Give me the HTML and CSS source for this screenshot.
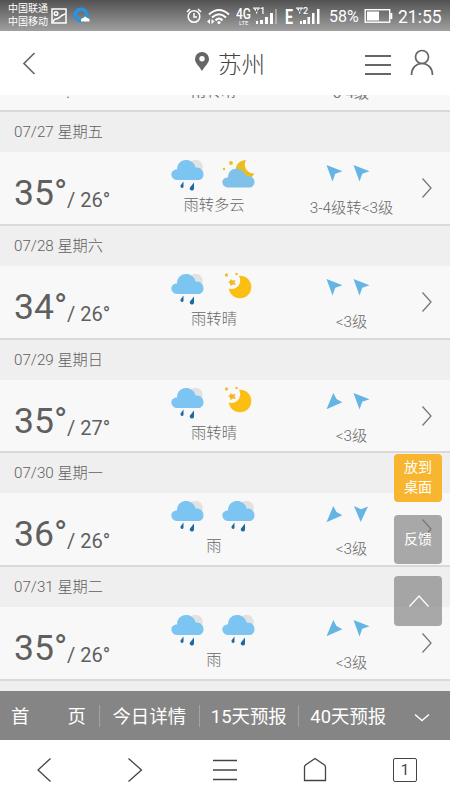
FILE: index.html
```html
<!DOCTYPE html>
<html lang="zh-CN">
<head>
<meta charset="utf-8">
<title>苏州天气</title>
<link rel="stylesheet" href="styles.css">
</head>
<body>
<svg class="defs" width="0" height="0">
  <symbol id="rain" viewBox="0 0 33 34">
    <circle cx="24.500" cy="9" r="7.300" fill="#e2e2e2"/>
    <path d="M6 22C-1.500 21-1.500 11.500 6 11.500C6 4 12 1.500 16 2C21 2.500 24 6 24.500 9.500C29 9 32.500 12 32.500 16C32.500 20 30 22 27 22Z" fill="#7cc4f1"/>
    <path d="M12.500 23.500V28.500Q12.500 30 11 30Q9 29.500 9.500 27.500ZM23 24.500V30.500Q23 33 20.500 32.500Q18 31.500 19 29.500Z" fill="#1c689f"/>
  </symbol>
  <symbol id="cloudy" viewBox="0 0 33 34">
    <path d="M24 2C19 2 13 6 14 12L24 19H30L32.500 15.500C27 16 20 10 24 2Z" fill="#eabe21"/>
    <circle cx="9" cy="5" r="1.900" fill="#eabe21"/><circle cx="2" cy="11" r="1.200" fill="#eabe21"/>
    <path d="M6 29.500C-1.500 28.500-1.500 19.500 6 19.500C6 13 11 10 16 11C20 11.500 23.500 15 24 18C29 17.500 32.500 20 32.500 24C32.500 27.500 30 29.500 27 29.500Z" fill="#7fc1e8"/>
  </symbol>
  <symbol id="clear" viewBox="0 0 33 34">
    <circle cx="18" cy="15" r="11.300" fill="#fbbe12"/>
    <circle cx="9.500" cy="8.300" r="8.700" fill="#f9f9f9"/>
    <path d="M8.500 7L10.500 8.500L13.500 8L12.500 10.500L14 13L11 12.500L8.500 14L8 11.500L6 10L8 9Z" fill="#f5b824"/>
    <circle cx="4.500" cy="3" r="1.700" fill="#edc13c"/><circle cx="14.500" cy="2" r="1.300" fill="#edc13c"/>
  </symbol>
  <symbol id="nw" viewBox="0 0 17 18"><path d="M.500 1L16.500 7.200L9.300 9.800L6.500 17.500Z" fill="#65b5e4"/></symbol>
  <symbol id="sw" viewBox="0 0 17 18"><path d="M.500 17.300L16.300 10.200L10.500 7L7.300 1Z" fill="#65b5e4"/></symbol>
  <symbol id="s" viewBox="0 0 17 18"><path d="M1 1L8 4.300L15 1.500L7.700 17Z" fill="#65b5e4"/></symbol>
  <symbol id="next" viewBox="0 0 12 22"><path d="M1.500 1.500L10 11L1.500 20.500" fill="none" stroke="#777" stroke-width="1.300"/></symbol>
</svg>

<div class="screen">
  <header class="status">
    <div class="carriers"><span>中国联通</span><span>中国移动</span></div>
    <svg class="pic" width="16" height="16" viewBox="0 0 16 16" fill="none" stroke="#fff" stroke-width="1.500"><rect x="1" y="1" width="14" height="14"/><circle cx="5" cy="5.500" r="1.800"/><path d="M2 14Q3 11 5 11T9 9T14 6"/></svg>
    <svg class="browser" width="17" height="17" viewBox="0 0 17 17"><circle cx="8" cy="8" r="5.800" fill="none" stroke="#2295e6" stroke-width="3.600"/><path d="M8 14.500Q7.500 11 10.500 11Q12 8 14 11Q17 11 16.500 14.500Z" fill="#fff"/></svg>
    <div class="space"></div>
    <svg class="radio" width="54" height="20" viewBox="0 0 54 20" fill="none" stroke="#fff" stroke-width="1.500">
      <circle cx="8" cy="10.500" r="5.800"/><path d="M8 7V11H11M1 6L4 3M12 3L15 6"/>
      <path d="M23 8.500Q33 -.500 43 8.500M26 11.500Q33 5 40 11.500M29.500 14.500Q33 10.500 36.500 14.500" stroke-width="2"/><circle cx="33" cy="16.500" r="1.600" fill="#fff" stroke="none"/><path d="M21 15.500L24 13V18ZM28.500 15.500L25.500 13V18Z" fill="#fff" stroke="none"/>
    </svg>
    <svg class="signals" width="88" height="24" viewBox="0 0 88 24" fill="#fff">
      <text x="0" y="14.500" class="network" textLength="15" lengthAdjust="spacingAndGlyphs">4G</text>
      <text x="3" y="20.500" class="lte">LTE</text>
      <path d="M17 3.500H24V4.800H17ZM20 3.500H21.300V9.500H20ZM17.500 4.500L20.500 8L23.500 4.500"/><text x="24" y="10" class="slot">1</text>
      <path d="M20 17H22V20H20ZM24 16H27V20H24ZM29 13H32V20H29ZM34 9H37V20H34Z"/><path d="M39 5H41V20H39Z" opacity=".35"/>
      <text x="49" y="20" class="edge" textLength="8" lengthAdjust="spacingAndGlyphs">E</text>
      <path d="M60 3.500H67V4.800H60ZM63 3.500H64.300V9.500H63ZM60.500 4.500L63.500 8L66.500 4.500"/><text x="67" y="10" class="slot">2</text>
      <path d="M64 17H66V20H64ZM67 16H70V20H67ZM71.500 13H74V20H71.500ZM76 9H78.500V20H76ZM81 5H83.500V20H81Z"/>
    </svg>
    <span class="percent">58%</span>
    <svg class="battery" width="29" height="16" viewBox="0 0 29 16"><rect x="1.200" y="1.700" width="24.500" height="12.500" fill="none" stroke="#fff" stroke-width="1.400"/><path d="M3 3.500H15V12.500H3ZM26.300 5H28.300V11H26.300Z" fill="#fff"/></svg>
    <span class="time">21:55</span>
  </header>

  <nav class="top">
    <svg class="back" width="14" height="24" viewBox="0 0 14 24" fill="none" stroke="#686868" stroke-width="1.700"><path d="M12.500 2L2 12.500L12.500 23"/></svg>
    <div class="city">
      <svg width="16" height="21" viewBox="0 0 16 21"><path fill="#666" fill-rule="evenodd" d="M8 1A7 7 0 0 0 1 8C1 12 4.500 14.500 8 20C11.500 14.500 15 12 15 8A7 7 0 0 0 8 1ZM8 5A2.700 2.700 0 1 1 8 10.400A2.700 2.700 0 0 1 8 5Z"/></svg>
      <span>苏州</span>
    </div>
    <svg class="menu" width="26" height="22" viewBox="0 0 26 22" stroke="#666" stroke-width="2"><path d="M0 2H26M0 11H26M0 20H26"/></svg>
    <svg class="user" width="24" height="27" viewBox="0 0 24 27" fill="none" stroke="#666" stroke-width="1.700"><circle cx="12" cy="8" r="6.500"/><path d="M1.500 26C1.500 19 6 14.500 12 14.500S22.500 19 22.500 26"/></svg>
  </nav>

  <main class="forecast">
    <div class="cutoff"><span class="dot">.</span><span class="cut-weather">雨转晴</span><span class="cut-wind">3-4级</span></div>

    <section class="day">
      <h2>07/27 星期五</h2>
      <div class="detail">
        <div class="temp"><b>35°</b><span>/ 26°</span></div>
        <div class="weather"><div class="icons"><svg><use href="#rain"/></svg><svg><use href="#cloudy"/></svg></div><p>雨转多云</p></div>
        <div class="wind"><div class="icons"><svg><use href="#nw"/></svg><svg><use href="#nw"/></svg></div><p>3-4级转&lt;3级</p></div>
        <svg class="next"><use href="#next"/></svg>
      </div>
    </section>
    <section class="day">
      <h2>07/28 星期六</h2>
      <div class="detail">
        <div class="temp"><b>34°</b><span>/ 26°</span></div>
        <div class="weather"><div class="icons"><svg><use href="#rain"/></svg><svg><use href="#clear"/></svg></div><p>雨转晴</p></div>
        <div class="wind"><div class="icons"><svg><use href="#nw"/></svg><svg><use href="#nw"/></svg></div><p>&lt;3级</p></div>
        <svg class="next"><use href="#next"/></svg>
      </div>
    </section>
    <section class="day">
      <h2>07/29 星期日</h2>
      <div class="detail">
        <div class="temp"><b>35°</b><span>/ 27°</span></div>
        <div class="weather"><div class="icons"><svg><use href="#rain"/></svg><svg><use href="#clear"/></svg></div><p>雨转晴</p></div>
        <div class="wind"><div class="icons"><svg><use href="#sw"/></svg><svg><use href="#nw"/></svg></div><p>&lt;3级</p></div>
        <svg class="next"><use href="#next"/></svg>
      </div>
    </section>
    <section class="day">
      <h2>07/30 星期一</h2>
      <div class="detail">
        <div class="temp"><b>36°</b><span>/ 26°</span></div>
        <div class="weather"><div class="icons"><svg><use href="#rain"/></svg><svg><use href="#rain"/></svg></div><p>雨</p></div>
        <div class="wind"><div class="icons"><svg><use href="#sw"/></svg><svg><use href="#s"/></svg></div><p>&lt;3级</p></div>
        <svg class="next"><use href="#next"/></svg>
      </div>
    </section>
    <section class="day">
      <h2>07/31 星期二</h2>
      <div class="detail">
        <div class="temp"><b>35°</b><span>/ 26°</span></div>
        <div class="weather"><div class="icons"><svg><use href="#rain"/></svg><svg><use href="#rain"/></svg></div><p>雨</p></div>
        <div class="wind"><div class="icons"><svg><use href="#sw"/></svg><svg><use href="#nw"/></svg></div><p>&lt;3级</p></div>
        <svg class="next"><use href="#next"/></svg>
      </div>
    </section>
    <div class="following"></div>
  </main>

  <nav class="tabs">
    <span class="home">首<i></i>页</span><span>今日详情</span><span>15天预报</span><span>40天预报</span>
    <svg width="16" height="10" viewBox="0 0 16 10" fill="none" stroke="#fff" stroke-width="1.400"><path d="M1 1.500L8 7.500L15 1.500"/></svg>
  </nav>

  <footer class="toolbar">
    <svg viewBox="0 0 26 26"><path d="M18.500 1.500L6 13L18.500 24.500"/></svg>
    <svg viewBox="0 0 26 26"><path d="M6.500 1.500L19.500 13L6.500 24.500"/></svg>
    <svg viewBox="0 0 26 26"><path d="M1 3.500H25M1 13H25M1 22.500H25"/></svg>
    <svg viewBox="0 0 26 26"><path d="M2.500 10Q2.500 9 3.500 8L13 1.500L22.500 8Q23.500 9 23.500 10V23.500H2.500Z"/></svg>
    <span class="pages">1</span>
  </footer>

  <aside class="floating">
    <div class="desktop">放到<br>桌面</div>
    <div class="feedback">反馈</div>
    <div class="to-top"><svg width="22" height="14" viewBox="0 0 22 14" fill="none" stroke="#fff" stroke-width="1.200"><path d="M1.500 12.500L11 2L20.500 12.500"/></svg></div>
  </aside>
</div>
</body>
</html>
```

FILE: styles.css
```css
* { box-sizing: border-box; }
body { margin: 0; font-family: Roboto, "Noto Sans CJK SC", sans-serif; color: #777; background: #fff; }
h2, p { margin: 0; font-weight: 300; }
svg { display: block; flex: none; }
.defs { position: absolute; }
.screen { position: relative; width: 450px; height: 800px; overflow: hidden; display: flex; flex-direction: column; }

.status { height: 31px; flex: none; display: flex; align-items: center; padding: 0 8px; color: #fff; background: linear-gradient(#525252, #a0a0a0); white-space: nowrap; }
.carriers { width: 43px; display: flex; flex-direction: column; font-size: 10px; line-height: 13.500px; margin-top: -1px; }
.pic { margin-top: 1px; }
.browser { margin-left: 6px; }
.space { flex: 1; }
.radio { margin-right: -4px; }
.network { font-size: 14px; font-weight: 500; }
.lte { font-size: 6px; }
.slot { font-size: 9px; font-weight: 500; }
.edge { font-size: 20px; font-weight: 700; }
.percent { width: 34px; margin-left: 5px; font-size: 16px; line-height: 20px; margin-top: 2px; }
.battery { margin-left: 1px; margin-top: 1px; }
.time { width: 44px; margin-left: 5px; font-size: 17.500px; line-height: 20px; margin-top: 2px; }

.top { height: 64px; flex: none; display: flex; align-items: center; padding: 0 16px 0 22px; background: #fff; }
.city { flex: 1; display: flex; align-items: center; padding-left: 158px; gap: 8px; font-size: 23.500px; font-weight: 300; line-height: 30px; color: #444; }
.city svg { margin-top: -3px; }
.city span { margin-top: 4px; }
.menu { margin-right: 19px; margin-top: 3px; }
.user { margin-top: -1px; }

.forecast { height: 596px; flex: none; overflow: hidden; background: #f8f8f8; }
.cutoff { height: 15px; display: flex; overflow: hidden; font-size: 15px; line-height: 20px; }
.cutoff span { margin-top: -12px; }
.dot { width: 191px; padding-left: 66px; }
.cutoff .cut-weather { width: 142px; margin-top: -14px; }
.day { height: 113.800px; display: flex; flex-direction: column; border-top: 2px solid #d9d9d9; }
.day h2 { height: 40px; flex: none; padding-left: 14px; font-size: 15.200px; line-height: 41px; background: #efefef; color: #606060; }
.detail { flex: 1; display: grid; grid-template-columns: 146px 136px 138px 30px; }
.temp { display: flex; align-items: baseline; padding: 20px 0 0 14px; white-space: nowrap; color: #5f5f5f; }
.temp b { width: 53px; font-size: 35.500px; line-height: 42px; font-weight: 400; }
.temp span { position: relative; top: 2px; font-size: 20px; line-height: 24px; }
.icons { display: flex; justify-content: center; }
.weather { padding-top: 6px; text-align: center; }
.weather .icons { gap: 18px; padding-right: 3px; }
.weather .icons svg { width: 33px; height: 34px; }
.weather p, .wind p { font-size: 15.300px; line-height: 20px; white-space: nowrap; color: #666; }
.weather p { margin-top: 3px; }
.wind { padding-top: 12px; text-align: center; }
.wind .icons { gap: 10px; padding-right: 6px; }
.wind .icons svg { width: 17px; height: 18px; }
.wind p { margin-top: 16px; padding-left: 1px; }
.next { width: 12px; height: 22px; margin: 25px 0 0 1px; }
.following { height: 20px; border-top: 2px solid #d9d9d9; background: #efefef; }

.tabs { height: 49px; flex: none; display: flex; align-items: center; background: #858585; color: #fff; font-size: 18.400px; line-height: 24px; white-space: nowrap; }
.tabs span { width: 99.500px; height: 22px; line-height: 23px; text-align: center; border-left: 1px solid #a2a2a2; }
.tabs .home { display: flex; width: 99px; padding-left: 11px; border: 0; }
.home i { width: 38px; }
.tabs svg { margin: 5px 0 0 16px; }

.toolbar { height: 60px; flex: none; display: flex; align-items: center; background: #fff; }
.toolbar svg { width: 26px; height: 26px; margin: 0 32px; fill: none; stroke: #444; stroke-width: 1.300; }
.pages { width: 24px; height: 24px; margin-left: 33px; border: 1px solid #444; border-radius: 2px; font-size: 15px; line-height: 23px; text-align: center; color: #444; }

.floating { position: absolute; left: 394px; top: 454px; width: 48px; color: #fff; font-size: 14px; line-height: 20px; text-align: center; }
.floating div { border-radius: 4px; }
.desktop { height: 48px; padding-top: 3px; background: #f8b530; }
.feedback { height: 49px; margin-top: 13px; padding-top: 14px; background: rgba(120, 120, 120, .62); }
.to-top { height: 50px; margin-top: 12px; padding: 18px 0 0 14px; background: rgba(120, 120, 120, .62); }
```
